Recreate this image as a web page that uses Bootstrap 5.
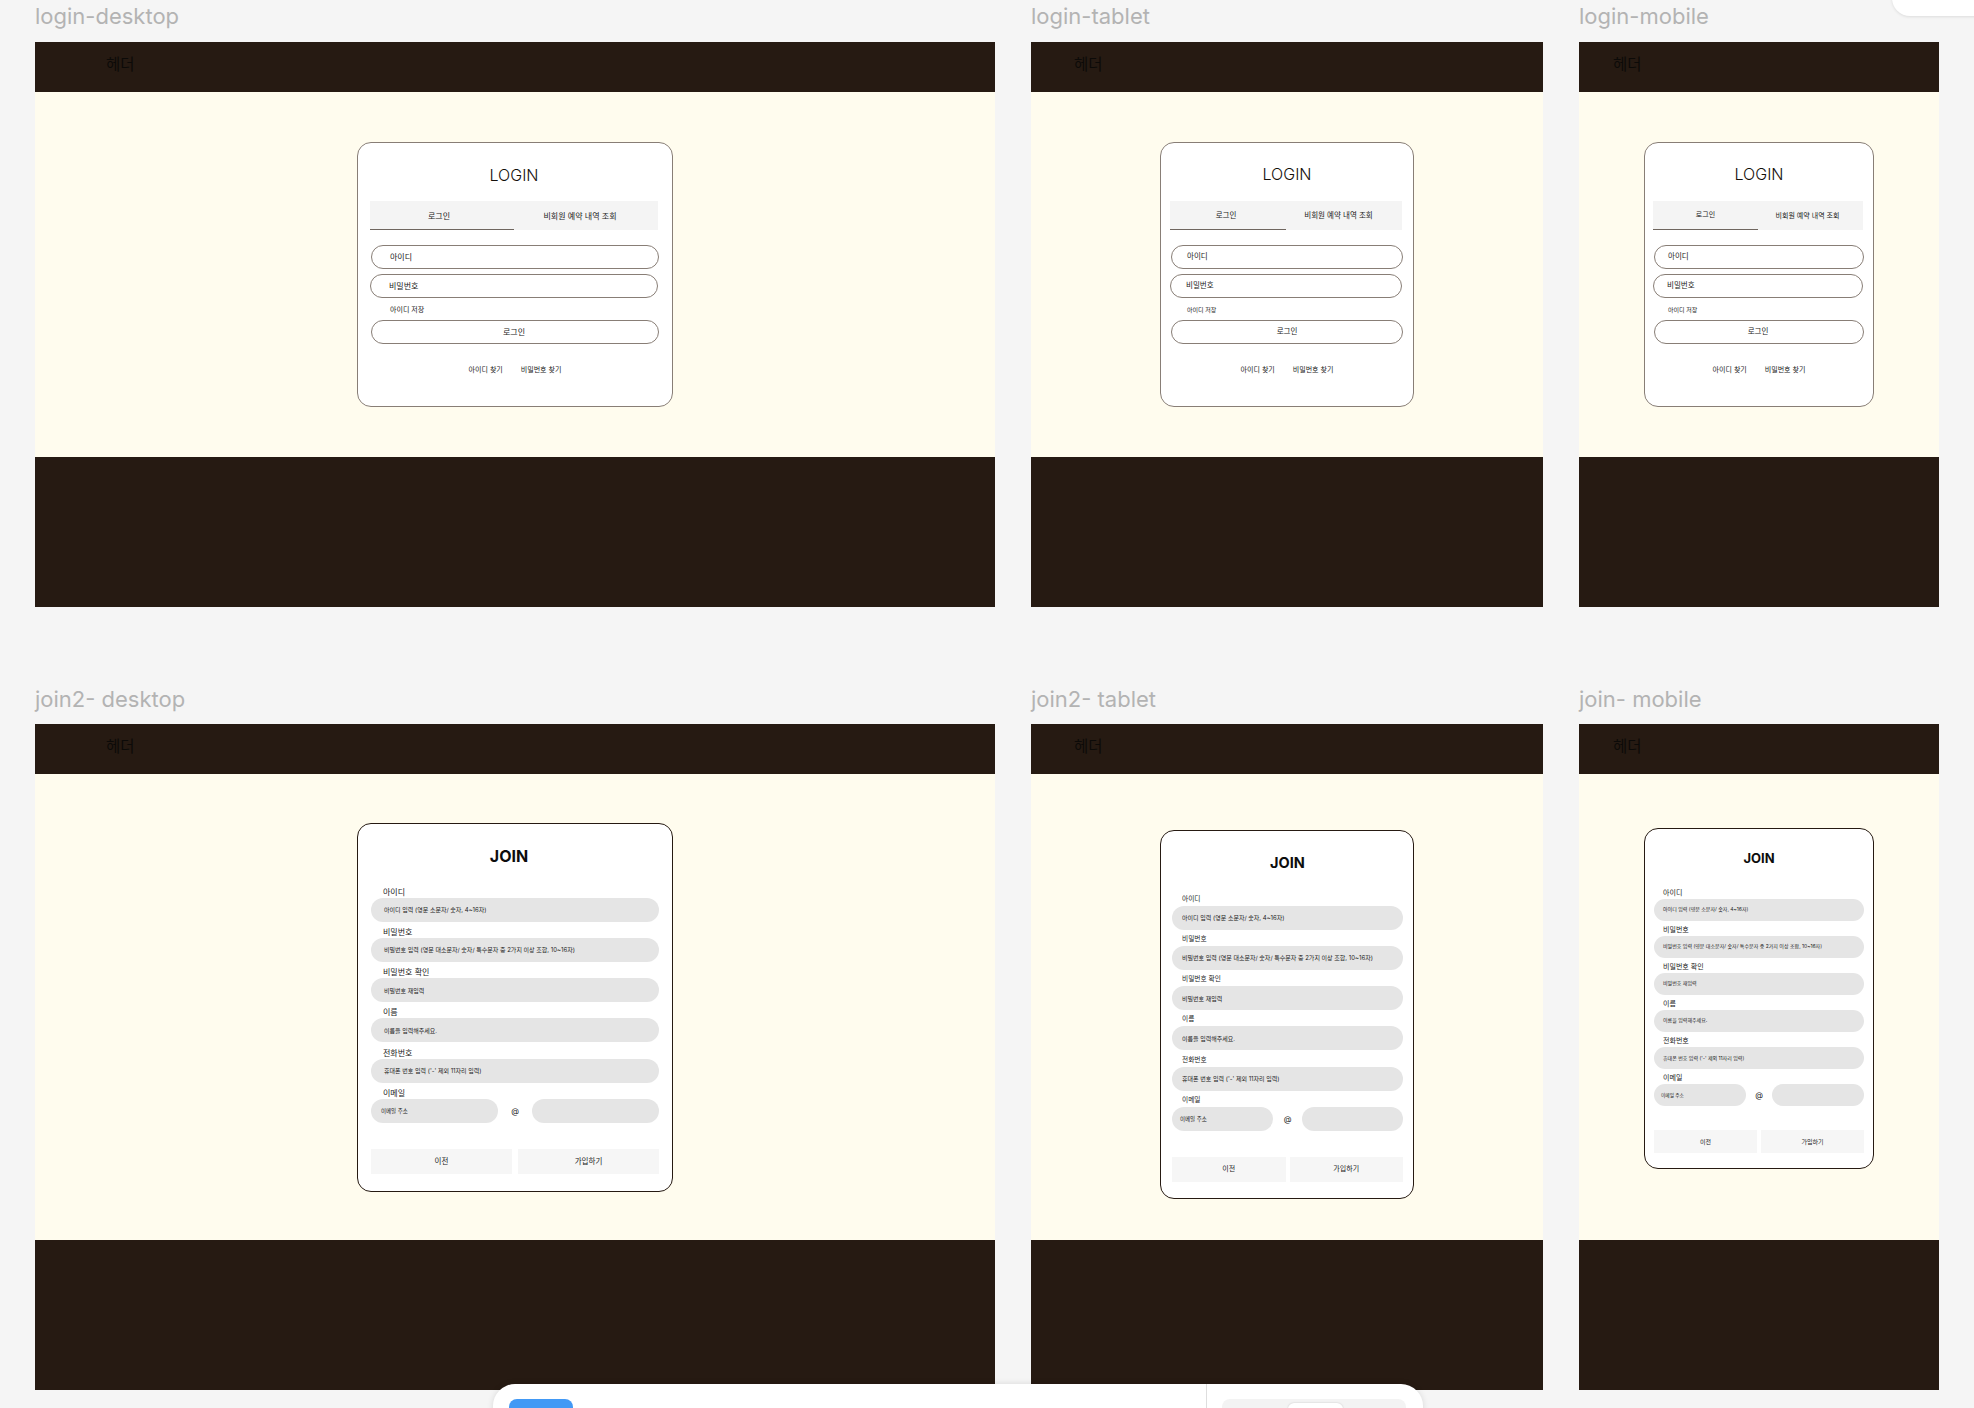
<!DOCTYPE html>
<html lang="ko">
<head>
<meta charset="utf-8">
<title>login / join frames</title>
<link href="https://cdn.jsdelivr.net/npm/bootstrap@5.3.0/dist/css/bootstrap.min.css" rel="stylesheet">
<style>
html,body{height:1408px;overflow:hidden}
body{background:#f5f5f5;font-family:Inter,"Noto Sans CJK KR",sans-serif;color:#222;position:relative}
.board{padding:6px 0 0 35px;width:1974px}
.art-row{gap:36px}
.art-row-2{margin-top:82px}
.frame-name{font-size:22px;line-height:20px;color:#b3b3b3;margin-bottom:16px;white-space:nowrap}
.art-row-2 .frame-name{margin-bottom:15px}
.f-desktop{width:960px}.f-tablet{width:512px}.f-mobile{width:360px}
.art-head{height:50px;background:#261a12;color:#0c0a08;font-size:15.5px;padding-bottom:4px}
.f-desktop .art-head{padding-left:71px}
.f-tablet .art-head{padding-left:43px}
.f-mobile .art-head{padding-left:34px}
.art-main{background:#fffcee}
.art-row-1 .art-main{height:365px}
.art-row-2 .art-main{height:466px}
.art-foot{height:150px;background:#261a12}
/* login card */
.login-box{height:265px;background:#fff;border:1px solid #887e76;border-radius:14px}
.f-desktop .login-box{width:316px;padding:20px 14px 0 12px;--tw:288px;--ix:19px;--gox:2px;--tabs:8px;--pills:8px}
.f-tablet .login-box{width:254px;padding:19px 11px 0 9px;--tw:232px;--ix:16px;--gox:0px;--tabs:7.5px;--pills:7.5px}
.f-mobile .login-box{width:230px;padding:19px 10px 0 8px;--tw:210px;--ix:14px;--gox:2px;--tabs:7px;--pills:7.5px}
.ttl{height:24px;line-height:24px;font-size:16px;color:#261a12;text-align:center;width:var(--tw)}
.ttl-thin{font-weight:300;color:#15100b}
.f-tablet .ttl-thin,.f-mobile .ttl-thin{padding-left:2px;margin-bottom:15px}
.tab-strip{height:29px;margin-top:14px;background:#f4f4f4;font-size:var(--tabs);width:var(--tw)}
.f-tablet .tab-strip,.f-mobile .tab-strip{margin-top:0}
.tab-strip>div{width:50%;padding-top:1px}
.tab-on{border-bottom:1px solid #6f665f}
.f-desktop .tab-on{padding-right:6px}.f-desktop .tab-off{padding-right:12px}
.f-tablet .tab-on{padding-right:4px}.f-tablet .tab-off{padding-right:11px}
.f-mobile .tab-off{padding-right:6px}
.pill-line{width:var(--tw);height:24px;border:1px solid #887e76;padding-left:calc(var(--ix) - 1px);font-size:var(--pills);background:#fff}
.pill-a{margin:15px 0 0 1px}
.pill-b{margin-top:5px}
.save-id{height:12px;line-height:12px;margin-top:6px;padding-left:calc(var(--ix) + 1px);font-size:7px}
.f-tablet .save-id,.f-mobile .save-id{font-size:6px}
.pill-go{margin:4px 0 0 1px;padding-left:0;padding-right:var(--gox)}
.find-row{width:var(--tw);height:12px;margin-top:20px;padding-left:2px;gap:18px;font-size:7px}
/* join card */
.join-box{background:#fff;border:1px solid #261a12;border-radius:14px}
.f-desktop .join-box{width:316px;height:369px;padding:20px 13px 0;--tw:288px;--ih:24px;--gap:4.3px;--tx:13px;--ex:10px;--lx:12px;--ls:8px;--ps:6px;--es:5.5px;--top:18px;--lb:0px;--btn:25px;--bg:6px;--mb:26px;--bs:7.5px;--jt:16px}
.f-tablet .join-box{width:254px;height:369px;margin-top:14px;padding:20px 10px 0 11px;--tw:231px;--ih:24px;--gap:3.3px;--tx:10px;--ex:8px;--lx:10px;--ls:6.7px;--ps:6px;--es:5.5px;--top:18px;--lb:1px;--btn:25px;--bg:4px;--mb:26px;--bs:7px;--jt:14.5px}
.f-mobile .join-box{width:230px;height:341px;margin-bottom:18px;padding:17px 9px 0;--tw:210px;--ih:22px;--gap:3.2px;--tx:9px;--ex:7px;--lx:9px;--ls:7px;--ps:5px;--es:4.7px;--top:17px;--lb:0px;--btn:23px;--bg:4px;--mb:24px;--bs:6px;--jt:13px}
.ttl-bold{font-weight:700;color:#0d0d0d;font-size:var(--jt)}
.f-desktop .ttl-bold{padding-right:12px}
.field-stack{margin-top:var(--top);width:var(--tw);gap:var(--gap)}
.fld-label{height:12px;line-height:12px;padding-left:var(--lx);font-size:var(--ls);margin-bottom:var(--lb);white-space:nowrap}
.fld-fill{height:var(--ih);background:#e5e5e5;padding-left:var(--tx);font-size:var(--ps);white-space:nowrap}
.fld-half{padding-left:var(--ex);font-size:var(--es)}
.f-desktop .fld-half{flex:0 0 127px}
.f-tablet .fld-half{flex:0 0 101px}
.f-mobile .fld-half{flex:0 0 92px}
.at-sign{font-size:8px}
.foot-btns{width:var(--tw);margin-top:var(--mb);gap:var(--bg)}
.foot-btns>div{flex:1 1 0;height:var(--btn);background:#f6f6f6;font-size:var(--bs)}
/* app chrome over the canvas */
.tool-dock{position:absolute;left:493px;top:1384px;width:930px;height:60px;background:#fff;border-radius:22px;box-shadow:0 0 6px rgba(0,0,0,.12);padding:15px 17px 0 16px}
.dock-blue{width:64px;height:30px;background:#4299f5;border-radius:8px}
.dock-rule{width:1px;height:60px;margin:-15px 15px 0 0;background:#dedede}
.dock-seg{width:184px;height:30px;background:#f3f3f3;border-radius:8px;padding:4px 0 0 66px}
.dock-thumb{width:55px;height:26px;background:#fff;border-radius:6px;box-shadow:0 0 2px rgba(0,0,0,.2)}
.corner-panel{position:absolute;left:1892px;top:-20px;width:100px;height:36px;background:#fff;border-radius:20px;box-shadow:0 1px 3px rgba(0,0,0,.1)}
</style>
</head>
<body>
<div class="board">
  <div class="d-flex art-row art-row-1">
    <section class="f-desktop">
      <div class="frame-name">login-desktop</div>
      <div class="art-head d-flex align-items-center">헤더</div>
      <div class="art-main d-flex align-items-center justify-content-center">
        <div class="login-box">
          <div class="ttl ttl-thin">LOGIN</div>
          <div class="tab-strip d-flex"><div class="tab-on d-flex align-items-center justify-content-center">로그인</div><div class="tab-off d-flex align-items-center justify-content-center">비회원 예약 내역 조회</div></div>
          <div class="pill-line pill-a rounded-pill d-flex align-items-center">아이디</div>
          <div class="pill-line pill-b rounded-pill d-flex align-items-center">비밀번호</div>
          <div class="save-id">아이디 저장</div>
          <div class="pill-line pill-go rounded-pill d-flex align-items-center justify-content-center">로그인</div>
          <div class="find-row d-flex justify-content-center align-items-center"><span>아이디 찾기</span><span>비밀번호 찾기</span></div>
        </div>
      </div>
      <div class="art-foot"></div>
    </section>
    <section class="f-tablet">
      <div class="frame-name">login-tablet</div>
      <div class="art-head d-flex align-items-center">헤더</div>
      <div class="art-main d-flex align-items-center justify-content-center">
        <div class="login-box">
          <div class="ttl ttl-thin">LOGIN</div>
          <div class="tab-strip d-flex"><div class="tab-on d-flex align-items-center justify-content-center">로그인</div><div class="tab-off d-flex align-items-center justify-content-center">비회원 예약 내역 조회</div></div>
          <div class="pill-line pill-a rounded-pill d-flex align-items-center">아이디</div>
          <div class="pill-line pill-b rounded-pill d-flex align-items-center">비밀번호</div>
          <div class="save-id">아이디 저장</div>
          <div class="pill-line pill-go rounded-pill d-flex align-items-center justify-content-center">로그인</div>
          <div class="find-row d-flex justify-content-center align-items-center"><span>아이디 찾기</span><span>비밀번호 찾기</span></div>
        </div>
      </div>
      <div class="art-foot"></div>
    </section>
    <section class="f-mobile">
      <div class="frame-name">login-mobile</div>
      <div class="art-head d-flex align-items-center">헤더</div>
      <div class="art-main d-flex align-items-center justify-content-center">
        <div class="login-box">
          <div class="ttl ttl-thin">LOGIN</div>
          <div class="tab-strip d-flex"><div class="tab-on d-flex align-items-center justify-content-center">로그인</div><div class="tab-off d-flex align-items-center justify-content-center">비회원 예약 내역 조회</div></div>
          <div class="pill-line pill-a rounded-pill d-flex align-items-center">아이디</div>
          <div class="pill-line pill-b rounded-pill d-flex align-items-center">비밀번호</div>
          <div class="save-id">아이디 저장</div>
          <div class="pill-line pill-go rounded-pill d-flex align-items-center justify-content-center">로그인</div>
          <div class="find-row d-flex justify-content-center align-items-center"><span>아이디 찾기</span><span>비밀번호 찾기</span></div>
        </div>
      </div>
      <div class="art-foot"></div>
    </section>
  </div>

  <div class="d-flex art-row art-row-2">
    <section class="f-desktop">
      <div class="frame-name">join2- desktop</div>
      <div class="art-head d-flex align-items-center">헤더</div>
      <div class="art-main d-flex align-items-center justify-content-center">
        <div class="join-box">
          <div class="ttl ttl-bold">JOIN</div>
          <div class="field-stack d-flex flex-column">
            <div><div class="fld-label">아이디</div><div class="fld-fill rounded-pill d-flex align-items-center">아이디 입력 (영문 소문자/ 숫자, 4~16자)</div></div>
            <div><div class="fld-label">비밀번호</div><div class="fld-fill rounded-pill d-flex align-items-center">비밀번호 입력 (영문 대소문자/ 숫자/ 특수문자 중 2가지 이상 조합, 10~16자)</div></div>
            <div><div class="fld-label">비밀번호 확인</div><div class="fld-fill rounded-pill d-flex align-items-center">비밀번호 재입력</div></div>
            <div><div class="fld-label">이름</div><div class="fld-fill rounded-pill d-flex align-items-center">이름을 입력해주세요.</div></div>
            <div><div class="fld-label">전화번호</div><div class="fld-fill rounded-pill d-flex align-items-center">휴대폰 번호 입력 ('-' 제외 11자리 입력)</div></div>
            <div><div class="fld-label">이메일</div><div class="d-flex align-items-center justify-content-between"><div class="fld-fill fld-half rounded-pill d-flex align-items-center">이메일 주소</div><span class="at-sign">@</span><div class="fld-fill fld-half rounded-pill"></div></div></div>
          </div>
          <div class="foot-btns d-flex"><div class="d-flex align-items-center justify-content-center">이전</div><div class="d-flex align-items-center justify-content-center">가입하기</div></div>
        </div>
      </div>
      <div class="art-foot"></div>
    </section>
    <section class="f-tablet">
      <div class="frame-name">join2- tablet</div>
      <div class="art-head d-flex align-items-center">헤더</div>
      <div class="art-main d-flex align-items-center justify-content-center">
        <div class="join-box">
          <div class="ttl ttl-bold">JOIN</div>
          <div class="field-stack d-flex flex-column">
            <div><div class="fld-label">아이디</div><div class="fld-fill rounded-pill d-flex align-items-center">아이디 입력 (영문 소문자/ 숫자, 4~16자)</div></div>
            <div><div class="fld-label">비밀번호</div><div class="fld-fill rounded-pill d-flex align-items-center">비밀번호 입력 (영문 대소문자/ 숫자/ 특수문자 중 2가지 이상 조합, 10~16자)</div></div>
            <div><div class="fld-label">비밀번호 확인</div><div class="fld-fill rounded-pill d-flex align-items-center">비밀번호 재입력</div></div>
            <div><div class="fld-label">이름</div><div class="fld-fill rounded-pill d-flex align-items-center">이름을 입력해주세요.</div></div>
            <div><div class="fld-label">전화번호</div><div class="fld-fill rounded-pill d-flex align-items-center">휴대폰 번호 입력 ('-' 제외 11자리 입력)</div></div>
            <div><div class="fld-label">이메일</div><div class="d-flex align-items-center justify-content-between"><div class="fld-fill fld-half rounded-pill d-flex align-items-center">이메일 주소</div><span class="at-sign">@</span><div class="fld-fill fld-half rounded-pill"></div></div></div>
          </div>
          <div class="foot-btns d-flex"><div class="d-flex align-items-center justify-content-center">이전</div><div class="d-flex align-items-center justify-content-center">가입하기</div></div>
        </div>
      </div>
      <div class="art-foot"></div>
    </section>
    <section class="f-mobile">
      <div class="frame-name">join- mobile</div>
      <div class="art-head d-flex align-items-center">헤더</div>
      <div class="art-main d-flex align-items-center justify-content-center">
        <div class="join-box">
          <div class="ttl ttl-bold">JOIN</div>
          <div class="field-stack d-flex flex-column">
            <div><div class="fld-label">아이디</div><div class="fld-fill rounded-pill d-flex align-items-center">아이디 입력 (영문 소문자/ 숫자, 4~16자)</div></div>
            <div><div class="fld-label">비밀번호</div><div class="fld-fill rounded-pill d-flex align-items-center">비밀번호 입력 (영문 대소문자/ 숫자/ 특수문자 중 2가지 이상 조합, 10~16자)</div></div>
            <div><div class="fld-label">비밀번호 확인</div><div class="fld-fill rounded-pill d-flex align-items-center">비밀번호 재입력</div></div>
            <div><div class="fld-label">이름</div><div class="fld-fill rounded-pill d-flex align-items-center">이름을 입력해주세요.</div></div>
            <div><div class="fld-label">전화번호</div><div class="fld-fill rounded-pill d-flex align-items-center">휴대폰 번호 입력 ('-' 제외 11자리 입력)</div></div>
            <div><div class="fld-label">이메일</div><div class="d-flex align-items-center justify-content-between"><div class="fld-fill fld-half rounded-pill d-flex align-items-center">이메일 주소</div><span class="at-sign">@</span><div class="fld-fill fld-half rounded-pill"></div></div></div>
          </div>
          <div class="foot-btns d-flex"><div class="d-flex align-items-center justify-content-center">이전</div><div class="d-flex align-items-center justify-content-center">가입하기</div></div>
        </div>
      </div>
      <div class="art-foot"></div>
    </section>
  </div>
</div>
<div class="corner-panel"></div>
<div class="tool-dock d-flex">
  <div class="dock-blue"></div>
  <div class="flex-grow-1"></div>
  <div class="dock-rule"></div>
  <div class="dock-seg"><div class="dock-thumb"></div></div>
</div>
<script src="https://cdn.jsdelivr.net/npm/bootstrap@5.3.0/dist/js/bootstrap.bundle.min.js"></script>
</body>
</html>
